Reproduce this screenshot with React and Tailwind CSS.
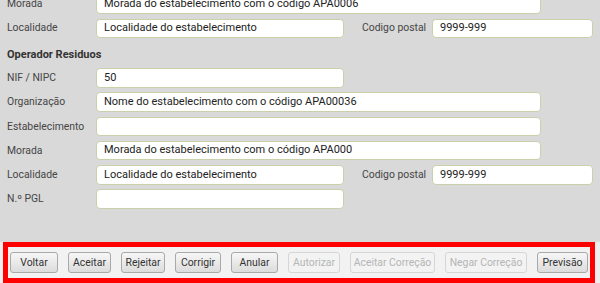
import React from 'react';

const font = { fontFamily: 'Roboto, "Open Sans", sans-serif' };

function Field({ label, value, wide, children }) {
  return (
    <div className="flex items-center h-[19.5px]">
      <span className="w-[89px] shrink-0 text-[10.4px] text-[#454545]">{label}</span>
      <div className={`${wide ? 'w-[445px]' : 'w-[248px]'} h-full shrink-0 bg-white border border-[#c9d1ab] rounded-[4px] px-[7px] flex items-center text-[11px] text-[#222] overflow-hidden whitespace-nowrap`}>
        {value}
      </div>
      {children}
    </div>
  );
}

function Postal() {
  return (
    <>
      <span className="ml-[18px] w-[70px] shrink-0 text-[10.4px] text-[#454545] whitespace-nowrap">Codigo postal</span>
      <div className="w-[161px] h-full shrink-0 bg-white border border-[#c9d1ab] rounded-[4px] px-[7px] flex items-center text-[11px] text-[#222]">9999-999</div>
    </>
  );
}

const buttons = [
  ['Voltar', true, 'w-[48px]'], ['Aceitar', true, 'w-[43px]'], ['Rejeitar', true, 'w-[44px]'],
  ['Corrigir', true, 'w-[46px]'], ['Anular', true, 'w-[47px]'], ['Autorizar', false, 'w-[52px]'],
  ['Aceitar Correção', false, 'w-[85px]'], ['Negar Correção', false, 'w-[82px]'], ['Previsão', true, 'w-[51px]'],
];

export default function App() {
  return (
    <div className="w-[600px] h-[283px] overflow-hidden bg-[#d9d9d9] flex flex-col" style={font}>
      <div className="flex-1 pl-[7px] flex flex-col">
        <div className="-mt-[6px] flex flex-col gap-[5px]">
          <Field label="Morada" value="Morada do estabelecimento com o código APA0006" wide />
          <Field label="Localidade" value="Localidade do estabelecimento"><Postal /></Field>
        </div>
        <h3 className="mt-[6px] h-[23px] flex items-center text-[11px] font-bold text-[#333]">Operador Residuos</h3>
        <div className="mt-[1px] flex flex-col gap-[4.8px]">
          <Field label="NIF / NIPC" value="50" />
          <Field label="Organização" value="Nome do estabelecimento com o código APA00036" wide />
          <Field label="Estabelecimento" value="" wide />
          <Field label="Morada" value="Morada do estabelecimento com o código APA000" wide />
          <Field label="Localidade" value="Localidade do estabelecimento"><Postal /></Field>
          <Field label="N.º PGL" value="" />
        </div>
      </div>
      <div className="h-[41px] bg-[#eeeeee] pl-[3px] pr-[5px]">
        <div className="h-full border-[5px] border-[#ff0000] bg-[#f2f2f2] flex items-center justify-between px-[2px]">
          {buttons.map(([t, on, w]) => (
            <button
              key={t}
              className={`${w} h-[21px] rounded-[3px] text-[10.4px] whitespace-nowrap border ${on ? 'border-[#a9a9a9] bg-gradient-to-b from-[#f7f7f7] to-[#dcdcdc] text-[#333]' : 'border-[#d6d6d6] bg-[#f3f3f3] text-[#b5b5b5]'}`}
            >
              {t}
            </button>
          ))}
        </div>
      </div>
    </div>
  );
}
